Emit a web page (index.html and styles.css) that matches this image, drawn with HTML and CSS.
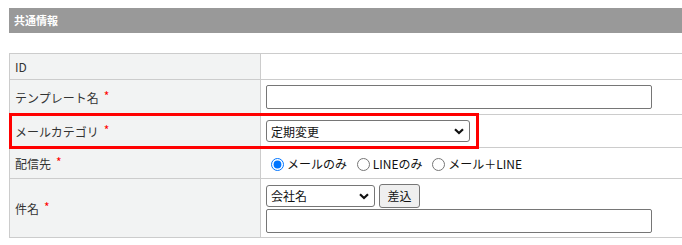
FILE: index.html
```html
<!DOCTYPE html>
<html lang="ja">
<head>
    <meta charset="UTF-8">
    <title>共通情報</title>
    <link rel="stylesheet" href="styles.css">
</head>
<body>
    <div class="section-title">共通情報</div>

    <div class="form-area">
        <table class="form-table">
            <tr class="row-id">
                <th>ID</th>
                <td></td>
            </tr>
            <tr class="row-template">
                <th>テンプレート名<span class="req">*</span></th>
                <td><input type="text" class="text-wide"></td>
            </tr>
            <tr class="row-category">
                <th>メールカテゴリ<span class="req">*</span></th>
                <td>
                    <span class="select-wrap category-select">
                        <select>
                            <option>定期変更</option>
                        </select>
                        <svg class="chevron" width="10" height="7" viewBox="0 0 10 7"><path d="M1 1.2 L5 5 L9 1.2" fill="none" stroke="#111" stroke-width="2.2"/></svg>
                    </span>
                </td>
            </tr>
            <tr class="row-dest">
                <th>配信先<span class="req">*</span></th>
                <td>
                    <label class="radio"><input type="radio" name="dest" checked>メールのみ</label>
                    <label class="radio"><input type="radio" name="dest">LINEのみ</label>
                    <label class="radio"><input type="radio" name="dest">メール＋LINE</label>
                </td>
            </tr>
            <tr class="row-subject">
                <th>件名<span class="req">*</span></th>
                <td>
                    <div class="insert-line">
                        <span class="select-wrap field-select">
                            <select>
                                <option>会社名</option>
                            </select>
                            <svg class="chevron" width="10" height="7" viewBox="0 0 10 7"><path d="M1 1.2 L5 5 L9 1.2" fill="none" stroke="#111" stroke-width="2.2"/></svg>
                        </span>
                        <button class="insert-button">差込</button>
                    </div>
                    <input type="text" class="text-wide">
                </td>
            </tr>
        </table>

        <!-- 注目枠 -->
        <div class="highlight"></div>
    </div>
</body>
</html>
```

FILE: styles.css
```css
body {
    margin: 8px 0 0 9px;
    font-family: 'Noto Sans CJK JP', 'Noto Sans', sans-serif;
    font-size: 12px;
    color: #333333;
    overflow: hidden;
}

.section-title {
    height: 25px;
    line-height: 25px;
    padding-left: 5px;
    background-color: #999999;
    color: #ffffff;
    font-size: 11px;
    font-weight: bold;
}

.form-area {
    position: relative;
    margin-top: 20px;
}

.form-table {
    border-collapse: collapse;
    width: 100%;
}

.form-table th,
.form-table td {
    border: 1px solid #cccccc;
    padding: 0 5px;
    vertical-align: middle;
}

.form-table td {
    border-right: none;
}

.form-table th {
    width: 240px;
    background-color: #f2f3f3;
    text-align: left;
    font-weight: normal;
}

.row-id th { height: 25px; }
.row-template th { height: 34px; }
.row-category th { height: 32px; }
.row-dest th { height: 30px; }
.row-subject th { height: 58px; }

.req {
    margin-left: 5px;
    color: #ff0000;
    font-size: 12px;
    position: relative;
    top: -2px;
}

.text-wide {
    display: block;
    box-sizing: border-box;
    width: 386px;
    height: 24px;
    margin: 0;
    border: 1px solid #767676;
    border-radius: 2px;
}

.select-wrap {
    position: relative;
    display: inline-block;
}

.select-wrap select {
    display: block;
    box-sizing: border-box;
    height: 22px;
    margin: 0;
    padding: 0 4px;
    border: 1px solid #767676;
    border-radius: 3px;
    background-color: #ffffff;
    font-family: inherit;
    font-size: 12px;
    color: #111111;
    appearance: none;
}

.category-select select { width: 204px; }
.field-select select { width: 109px; }

.chevron {
    position: absolute;
    right: 6px;
    top: 8px;
}

.insert-line {
    display: flex;
    align-items: center;
    gap: 4px;
    margin-bottom: 1px;
}

.insert-button {
    box-sizing: border-box;
    width: 41px;
    height: 24px;
    margin: 0;
    padding: 0;
    border: 1px solid #767676;
    border-radius: 3px;
    background-color: #efefef;
    font-family: inherit;
    font-size: 12px;
    color: #111111;
}

.radio {
    margin-right: 2px;
    color: #111111;
}

.radio input {
    width: 13px;
    height: 13px;
    margin: 0 3px 0 5px;
    vertical-align: -2px;
}

.highlight {
    position: absolute;
    left: 0;
    top: 60px;
    width: 470px;
    height: 36px;
    box-sizing: border-box;
    border: 3px solid #ff0000;
}
```
